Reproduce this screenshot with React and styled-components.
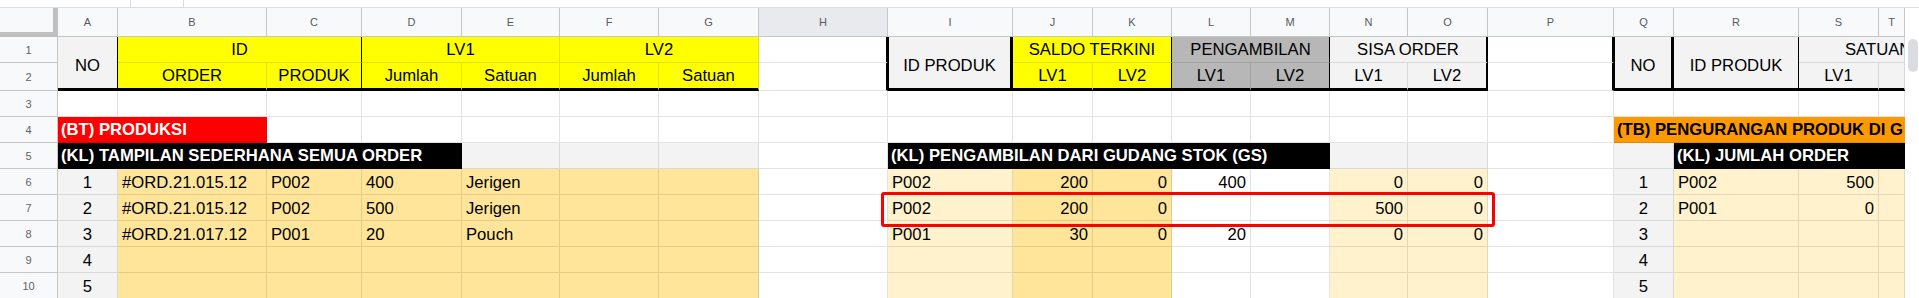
import React from 'react';
import styled, { createGlobalStyle } from 'styled-components';

const GlobalStyle = createGlobalStyle`
  html, body { margin: 0; padding: 0; background: #ffffff; }
  body { font-family: "Liberation Sans", Arial, sans-serif; overflow: hidden; }
  * { box-sizing: border-box; }
`;

const GRIDLINE = 'rgba(0,0,0,0.11)';
const HDR_LINE = '#c4c7c5';
const YEL = '#ffff00';
const G3 = '#f3f3f3';
const DG = '#b7b7b7';
const LY2 = '#ffe599';
const LY3 = '#fff2cc';
const RED = '#ff0000';
const ORG = '#ff9900';
const BLK = '#000000';
const B1 = '1px solid #000';
const B2 = '2px solid #000';
const B3 = '3px solid #000';

const COLUMNS = [
  ['A', 60], ['B', 149], ['C', 95], ['D', 100], ['E', 98], ['F', 99], ['G', 100],
  ['H', 129], ['I', 125], ['J', 80], ['K', 79], ['L', 79], ['M', 79], ['N', 78],
  ['O', 80], ['P', 126], ['Q', 60], ['R', 125], ['S', 80], ['T', 26],
];

const Page = styled.div`
  width: 1919px;
  height: 298px;
  overflow: hidden;
  background: #fff;
`;

const TopStrip = styled.div`
  height: 8px;
  border-bottom: 1px solid #dadce0;
  display: flex;
`;

const ToolStub = styled.div`
  margin-left: 130px;
  width: 54px;
  height: 7px;
  border-left: 1px solid #dadce0;
  border-right: 1px solid #dadce0;
`;

const Body = styled.div`
  display: flex;
`;

const Sheet = styled.div`
  position: relative;
  display: grid;
  grid-template-columns: 58px ${COLUMNS.map(c => `${c[1]}px`).join(' ')};
  grid-template-rows: 29px 26px 28px 26px 26px 26px 26px 26px 26px 26px 26px;
  width: 1905px;
`;

const Corner = styled.div`
  background: #f8f9fa;
  border-right: 5px solid #c0c0c0;
  border-bottom: 5px solid #c0c0c0;
`;

const ColHeader = styled.div`
  background: ${p => (p.$active ? '#e8eaed' : '#f8f9fa')};
  border-right: 1px solid ${HDR_LINE};
  border-bottom: 1px solid ${HDR_LINE};
  display: flex;
  align-items: center;
  justify-content: center;
  font-size: 11px;
  color: #575a5e;
`;

const RowNum = styled.div`
  background: #f8f9fa;
  border-right: 1px solid ${HDR_LINE};
  border-bottom: 1px solid ${HDR_LINE};
  display: flex;
  align-items: center;
  justify-content: center;
  font-size: 11px;
  color: #5f6368;
`;

const Cell = styled.div`
  grid-column: span ${p => p.$span || 1};
  grid-row: span ${p => p.$rspan || 1};
  min-width: 0;
  background: ${p => p.$bg || '#ffffff'};
  border-right: ${p => p.$r || `1px solid ${GRIDLINE}`};
  border-bottom: ${p => p.$b || `1px solid ${GRIDLINE}`};
  border-left: ${p => p.$l || 'none'};
  display: flex;
  align-items: flex-end;
  justify-content: ${p => (p.$align === 'right' ? 'flex-end' : p.$align === 'center' ? 'center' : 'flex-start')};
  padding: 0 4px 1px;
  font-size: 16.67px;
  line-height: normal;
  color: #000;
  white-space: nowrap;
  overflow: hidden;
`;

const HeaderCell = styled(Cell)`
  justify-content: ${p => (p.$start ? 'flex-start' : 'center')};
  align-items: ${p => (p.$mid ? 'center' : 'flex-end')};
  padding: ${p => (p.$mid ? '6px 2px 0' : p.$start ? '0 0 2px 46px' : '0 2px 2px')};
`;

const Banner = styled(Cell)`
  font-weight: 700;
  color: ${p => p.$ink || '#ffffff'};
  padding: 0 0 2px 3px;
  border-right: 1px solid ${p => p.$bg};
`;

const IndexCell = styled(Cell)`
  background: ${G3};
  justify-content: center;
`;

const Highlight = styled.div`
  position: absolute;
  left: 881px;
  top: 184px;
  width: 614px;
  height: 35px;
  border: 3px solid ${RED};
  border-radius: 3px;
  pointer-events: none;
`;

const ScrollTrack = styled.div`
  width: 14px;
  padding-top: 31px;
  padding-left: 3px;
  background: #fff;
`;

const Thumb = styled.div`
  width: 10px;
  height: 33px;
  border-radius: 5px;
  background: #dadce0;
`;

const orders = [
  ['#ORD.21.015.12', 'P002', '400', 'Jerigen'],
  ['#ORD.21.015.12', 'P002', '500', 'Jerigen'],
  ['#ORD.21.017.12', 'P001', '20', 'Pouch'],
  [],
  [],
];

const stock = [
  ['P002', '200', '0', '400', '', '0', '0'],
  ['P002', '200', '0', '', '', '500', '0'],
  ['P001', '30', '0', '20', '', '0', '0'],
  [],
  [],
];

const totals = [['P002', '500'], ['P001', '0'], [], [], []];

function DataRow({ n }) {
  const o = orders[n] || [];
  const s = stock[n] || [];
  const t = totals[n] || [];
  return (
    <>
      <RowNum>{n + 6}</RowNum>
      <IndexCell>{n + 1}</IndexCell>
      <Cell $bg={LY2}>{o[0]}</Cell>
      <Cell $bg={LY2}>{o[1]}</Cell>
      <Cell $bg={LY2}>{o[2]}</Cell>
      <Cell $bg={LY2}>{o[3]}</Cell>
      <Cell $bg={LY2} />
      <Cell $bg={LY2} />
      <Cell />
      <Cell $bg={LY3}>{s[0]}</Cell>
      <Cell $bg={LY2} $align="right">{s[1]}</Cell>
      <Cell $bg={LY2} $align="right">{s[2]}</Cell>
      <Cell $align="right">{s[3]}</Cell>
      <Cell $align="right">{s[4]}</Cell>
      <Cell $bg={LY3} $align="right">{s[5]}</Cell>
      <Cell $bg={LY3} $align="right">{s[6]}</Cell>
      <Cell />
      <IndexCell>{n + 1}</IndexCell>
      <Cell $bg={LY3}>{t[0]}</Cell>
      <Cell $bg={LY3} $align="right">{t[1]}</Cell>
      <Cell $bg={LY3} />
    </>
  );
}

export default function App() {
  return (
    <Page>
      <GlobalStyle />
      <TopStrip>
        <ToolStub />
      </TopStrip>
      <Body>
        <Sheet>
          <Corner />
          {COLUMNS.map(([c]) => (
            <ColHeader key={c} $active={c === 'H'}>{c}</ColHeader>
          ))}

          {/* Row 1 */}
          <RowNum>1</RowNum>
          <HeaderCell $rspan={2} $bg={G3} $r={B1} $b={B3} $mid>NO</HeaderCell>
          <HeaderCell $span={2} $bg={YEL} $r={B1}>ID</HeaderCell>
          <HeaderCell $span={2} $bg={YEL}>LV1</HeaderCell>
          <HeaderCell $span={2} $bg={YEL}>LV2</HeaderCell>
          <Cell $r={B2} />
          <HeaderCell $rspan={2} $bg={G3} $l={B1} $r={B3} $b={B3} $mid>ID PRODUK</HeaderCell>
          <HeaderCell $span={2} $bg={YEL} $r={B1}>SALDO TERKINI</HeaderCell>
          <HeaderCell $span={2} $bg={DG} $r={B1}>PENGAMBILAN</HeaderCell>
          <HeaderCell $span={2} $bg={G3} $r={B2}>SISA ORDER</HeaderCell>
          <Cell $r={B2} />
          <HeaderCell $rspan={2} $bg={G3} $l={B1} $r={B3} $b={B3} $mid>NO</HeaderCell>
          <HeaderCell $rspan={2} $bg={G3} $r={B1} $b={B3} $mid>ID PRODUK</HeaderCell>
          <HeaderCell $span={2} $bg={G3} $start>SATUAN</HeaderCell>

          {/* Row 2 */}
          <RowNum>2</RowNum>
          <HeaderCell $bg={YEL} $b={B3}>ORDER</HeaderCell>
          <HeaderCell $bg={YEL} $r={B1} $b={B3}>PRODUK</HeaderCell>
          <HeaderCell $bg={YEL} $b={B3}>Jumlah</HeaderCell>
          <HeaderCell $bg={YEL} $b={B3}>Satuan</HeaderCell>
          <HeaderCell $bg={YEL} $b={B3}>Jumlah</HeaderCell>
          <HeaderCell $bg={YEL} $b={B3}>Satuan</HeaderCell>
          <Cell $r={B2} />
          <HeaderCell $bg={YEL} $b={B3}>LV1</HeaderCell>
          <HeaderCell $bg={YEL} $r={B1} $b={B3}>LV2</HeaderCell>
          <HeaderCell $bg={DG} $b={B3}>LV1</HeaderCell>
          <HeaderCell $bg={DG} $r={B1} $b={B3}>LV2</HeaderCell>
          <HeaderCell $bg={G3} $b={B3}>LV1</HeaderCell>
          <HeaderCell $bg={G3} $r={B2} $b={B3}>LV2</HeaderCell>
          <Cell $r={B2} />
          <HeaderCell $bg={G3} $b={B3}>LV1</HeaderCell>
          <HeaderCell $bg={G3} $b={B3} />

          {/* Row 3 */}
          <RowNum>3</RowNum>
          {COLUMNS.map(([c]) => (
            <Cell key={`r3${c}`} />
          ))}

          {/* Row 4 */}
          <RowNum>4</RowNum>
          <Banner $span={2} $bg={RED}>(BT) PRODUKSI</Banner>
          {COLUMNS.slice(2, 16).map(([c]) => (
            <Cell key={`r4${c}`} />
          ))}
          <Banner $span={4} $bg={ORG} $ink="#000">(TB) PENGURANGAN PRODUK DI GUDANG STOK</Banner>

          {/* Row 5 */}
          <RowNum>5</RowNum>
          <Banner $span={4} $bg={BLK}>(KL) TAMPILAN SEDERHANA SEMUA ORDER</Banner>
          <Cell $bg={G3} />
          <Cell $bg={G3} />
          <Cell $bg={G3} />
          <Cell />
          <Banner $span={5} $bg={BLK}>(KL) PENGAMBILAN DARI GUDANG STOK (GS)</Banner>
          <Cell $bg={G3} />
          <Cell $bg={G3} />
          <Cell />
          <Cell $bg={G3} />
          <Banner $span={2} $bg={BLK}>(KL) JUMLAH ORDER</Banner>
          <Banner $bg={BLK} />

          {[0, 1, 2, 3, 4].map(n => (
            <DataRow key={n} n={n} />
          ))}

          <Highlight />
        </Sheet>
        <ScrollTrack>
          <Thumb />
        </ScrollTrack>
      </Body>
    </Page>
  );
}
